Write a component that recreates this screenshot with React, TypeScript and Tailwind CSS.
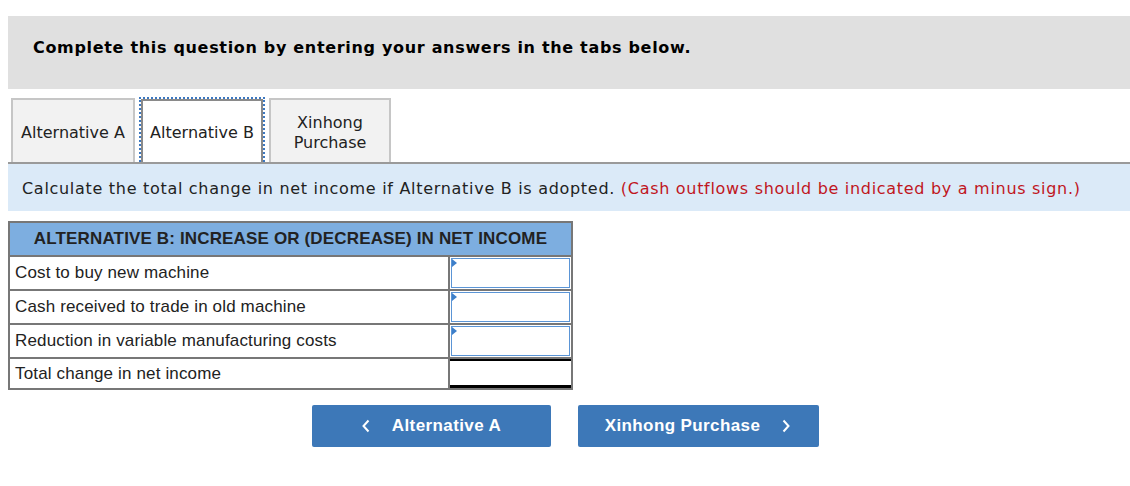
import React from "react";

const verdana = { fontFamily: '"DejaVu Sans", Verdana, sans-serif' };
const arial = { fontFamily: '"Liberation Sans", Arial, sans-serif' };

function Chevron({ dir }: { dir: "left" | "right" }) {
  return (
    <svg width="10" height="14" viewBox="0 0 10 14" fill="none">
      {dir === "left" ? (
        <path d="M7.5 1.5 L2.5 7 L7.5 12.5" stroke="white" strokeWidth="2" />
      ) : (
        <path d="M2.5 1.5 L7.5 7 L2.5 12.5" stroke="white" strokeWidth="2" />
      )}
    </svg>
  );
}

function InputCell() {
  return (
    <div className="relative w-[123px] h-full border-l-2 border-[#777] p-[1px] bg-white">
      <div className="w-full h-full border border-[#5b95d6] bg-white" />
      <div className="absolute left-[2px] top-[2px] w-0 h-0 border-t-[4px] border-b-[4px] border-l-[5px] border-t-transparent border-b-transparent border-l-[#3d7fc9]" />
    </div>
  );
}

export default function App() {
  const rows = [
    "Cost to buy new machine",
    "Cash received to trade in old machine",
    "Reduction in variable manufacturing costs",
  ];
  return (
    <div className="w-[1130px] h-[486px] bg-white pl-2 pt-4">
      <div className="h-[73px] bg-[#e0e0e0] pl-[25px] pt-[22px]">
        <div className="text-[16px] leading-[20px] font-bold text-black tracking-[0.68px]" style={verdana}>
          Complete this question by entering your answers in the tabs below.
        </div>
      </div>

      <div className="mt-[9px] border-b-2 border-[#9a9a9a] flex items-end pl-[3px] gap-[4px] h-[66px]" style={verdana}>
        <div className="w-[124px] h-[64px] bg-[#f2f2f2] border-2 border-b-0 border-[#c6c6c6] flex items-center justify-center pt-[4px] text-[16px] text-[#222] leading-[20px]">
          Alternative A
        </div>
        <div className="w-[126px] h-[65px] bg-white border-2 border-dotted border-b-0 border-[#3d78c0] flex">
          <div className="flex-1 border-2 border-b-0 border-[#8a8a8a] flex items-center justify-center pt-[2px] text-[16px] text-[#222] leading-[20px]">
            Alternative B
          </div>
        </div>
        <div className="w-[122px] h-[64px] bg-[#f2f2f2] border-2 border-b-0 border-[#c6c6c6] flex items-center justify-center pt-[4px] text-center text-[16px] text-[#222] leading-[20px]">
          Xinhong
          <br />
          Purchase
        </div>
      </div>

      <div className="h-[47px] bg-[#dbeaf8] pl-[14px] pt-[2px] flex items-center text-[16px] text-[#222] tracking-[0.7px]" style={verdana}>
        <span>
          Calculate the total change in net income if Alternative B is adopted.{" "}
          <span className="text-[#c0161e]">(Cash outflows should be indicated by a minus sign.)</span>
        </span>
      </div>

      <div className="mt-[10px] w-[565px] border-2 border-[#777]" style={arial}>
        <div className="h-[32px] bg-[#7daee0] flex items-center justify-center font-bold text-[17px] tracking-[0.15px] text-[#222]">
          ALTERNATIVE B: INCREASE OR (DECREASE) IN NET INCOME
        </div>
        {rows.map((r) => (
          <div key={r} className="h-[34px] border-t-2 border-[#777] flex">
            <div className="flex-1 pl-[5px] flex items-center text-[17px] tracking-[0.15px] text-[#222]">{r}</div>
            <InputCell />
          </div>
        ))}
        <div className="h-[31px] border-t-2 border-[#777] flex">
          <div className="flex-1 pl-[5px] flex items-center text-[17px] tracking-[0.15px] text-[#222]">Total change in net income</div>
          <div className="w-[123px] h-full border-l-2 border-[#777] bg-white flex flex-col">
            <div className="h-[2px] bg-black" />
            <div className="flex-1" />
            <div className="h-[3px] bg-black" />
          </div>
        </div>
      </div>

      <div className="mt-[15px] flex justify-center gap-[27px] pr-2" style={arial}>
        <div className="w-[239px] h-[42px] bg-[#3d78b8] rounded-[2px] flex items-center justify-center gap-[21px] text-white font-bold text-[17px] tracking-[0.4px]">
          <Chevron dir="left" />
          <span>Alternative A</span>
        </div>
        <div className="w-[241px] h-[42px] bg-[#3d78b8] rounded-[2px] flex items-center justify-center gap-[21px] text-white font-bold text-[17px] tracking-[0.4px]">
          <span>Xinhong Purchase</span>
          <Chevron dir="right" />
        </div>
      </div>
    </div>
  );
}
